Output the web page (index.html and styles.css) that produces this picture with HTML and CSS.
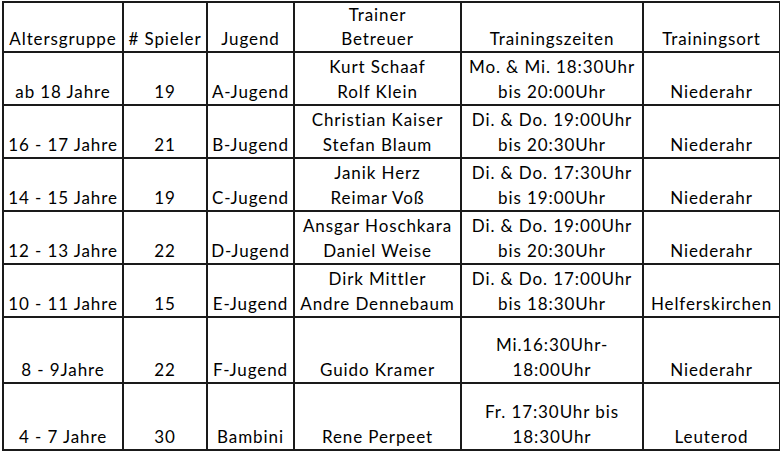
FILE: index.html
```html
<!DOCTYPE html>
<html lang="de">
<head>
<meta charset="utf-8">
<title>Mannschaften</title>
<link rel="stylesheet" href="styles.css">
</head>
<body>
<table class="teams">
  <colgroup>
    <col class="c-age"><col class="c-num"><col class="c-team"><col class="c-coach"><col class="c-time"><col class="c-place">
  </colgroup>
  <tr class="r-head">
    <td>Altersgruppe</td><td># Spieler</td><td>Jugend</td><td>Trainer<br>Betreuer</td><td>Trainingszeiten</td><td>Trainingsort</td>
  </tr>
  <tr class="r-std">
    <td>ab 18 Jahre</td><td>19</td><td>A-Jugend</td><td>Kurt Schaaf<br>Rolf Klein</td><td>Mo. &amp; Mi. 18:30Uhr<br>bis 20:00Uhr</td><td>Niederahr</td>
  </tr>
  <tr class="r-std">
    <td>16 - 17 Jahre</td><td>21</td><td>B-Jugend</td><td>Christian Kaiser<br>Stefan Blaum</td><td>Di. &amp; Do. 19:00Uhr<br>bis 20:30Uhr</td><td>Niederahr</td>
  </tr>
  <tr class="r-std">
    <td>14 - 15 Jahre</td><td>19</td><td>C-Jugend</td><td>Janik Herz<br>Reimar Voß</td><td>Di. &amp; Do. 17:30Uhr<br>bis 19:00Uhr</td><td>Niederahr</td>
  </tr>
  <tr class="r-std">
    <td>12 - 13 Jahre</td><td>22</td><td>D-Jugend</td><td>Ansgar Hoschkara<br>Daniel Weise</td><td>Di. &amp; Do. 19:00Uhr<br>bis 20:30Uhr</td><td>Niederahr</td>
  </tr>
  <tr class="r-std">
    <td>10 - 11 Jahre</td><td>15</td><td>E-Jugend</td><td>Dirk Mittler<br>Andre Dennebaum</td><td>Di. &amp; Do. 17:00Uhr<br>bis 18:30Uhr</td><td>Helferskirchen</td>
  </tr>
  <tr class="r-tall">
    <td>8 - 9Jahre</td><td>22</td><td>F-Jugend</td><td>Guido Kramer</td><td>Mi.16:30Uhr-<br>18:00Uhr</td><td>Niederahr</td>
  </tr>
  <tr class="r-last">
    <td>4 - 7 Jahre</td><td>30</td><td>Bambini</td><td>Rene Perpeet</td><td>Fr. 17:30Uhr bis<br>18:30Uhr</td><td>Leuterod</td>
  </tr>
</table>
</body>
</html>
```
FILE: styles.css
```css
html, body {
  margin: 0;
  padding: 0;
  background: #ffffff;
}

body {
  padding: 1px 0 0 2px;
  font-family: Lato, "Open Sans", sans-serif;
  color: #000000;
}

.teams {
  border-collapse: collapse;
  table-layout: fixed;
  width: 777px;
  font-size: 17px;
  letter-spacing: 0.9px;
  line-height: 25px;
}

.teams td {
  border: 2px solid #1a1a1a;
  text-align: center;
  vertical-align: bottom;
  padding: 0;
  white-space: nowrap;
  overflow: hidden;
}

.c-age { width: 120px; }
.c-num { width: 84px; }
.c-team { width: 87px; }
.c-coach { width: 167px; }
.c-time { width: 182px; }
.c-place { width: 137px; }

.r-head td { height: 48px; line-height: 24px; }
.r-std td { height: 51px; }
.r-tall td { height: 64px; }
.r-last td { height: 65px; }
```
